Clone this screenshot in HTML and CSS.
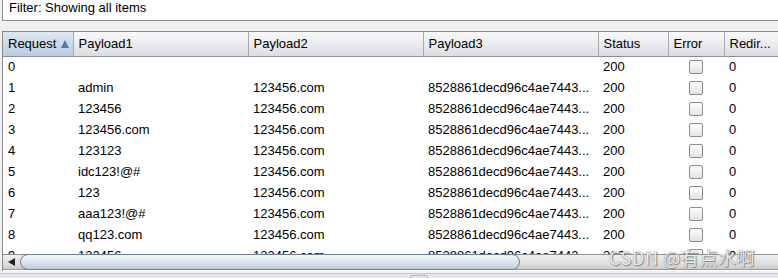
FILE: index.html
```html
<!DOCTYPE html>
<html lang="en">
<head>
    <meta charset="UTF-8">
    <title>Intruder results</title>
    <link rel="stylesheet" href="styles.css">
</head>
<body>
    <div class="filter-bar">Filter: Showing all items</div>

    <div class="results">
        <table class="grid">
            <colgroup>
                <col class="c-req"><col class="c-pay"><col class="c-pay"><col class="c-pay">
                <col class="c-status"><col class="c-error"><col class="c-redir">
            </colgroup>
            <thead>
                <tr>
                    <th class="sorted">Request <span class="sort-arrow"></span></th>
                    <th>Payload1</th>
                    <th>Payload2</th>
                    <th>Payload3</th>
                    <th>Status</th>
                    <th>Error</th>
                    <th>Redir...</th>
                </tr>
            </thead>
            <tbody id="rows"></tbody>
        </table>

        <div class="hscroll">
            <div class="arrow-btn"><span class="arrow-left"></span></div>
            <div class="thumb"></div>
        </div>
        <div class="watermark">CSDN @有点水啊</div>
    </div>
    <div class="bottom-strip"><span class="grip"></span></div>

    <script>
        const payloads = ['', 'admin', '123456', '123456.com', '123123', 'idc123!@#', '123', 'aaa123!@#', 'qq123.com', '123456'];
        const rows = document.getElementById('rows');

        payloads.forEach((p1, i) => {
            const tr = document.createElement('tr');
            const p2 = i === 0 ? '' : '123456.com';
            const p3 = i === 0 ? '' : '8528861decd96c4ae7443...';
            tr.innerHTML = `
                <td>${i}</td>
                <td>${p1}</td>
                <td>${p2}</td>
                <td>${p3}</td>
                <td>200</td>
                <td class="center"><span class="check"></span></td>
                <td>0</td>
            `;
            rows.appendChild(tr);
        });
    </script>
</body>
</html>
```

FILE: styles.css
```css
* {
    box-sizing: border-box;
    margin: 0;
    padding: 0;
}

body {
    font-family: 'Liberation Sans', Arial, sans-serif;
    font-size: 13px;
    color: #000;
    background: #f0f0f0;
    width: 778px;
    height: 278px;
    overflow: hidden;
}

.filter-bar {
    margin: -4px -10px 0 2px;
    height: 25px;
    padding: 4px 0 0 6px;
    line-height: 14px;
    background: #fff;
    border: 1px solid #8a8a8a;
}

.results {
    position: relative;
    margin: 10px 0 0 2px;
    height: 240px;
    background: #fff;
    border-left: 1px solid #8a8a8a;
    border-top: 1px solid #8a8a8a;
    overflow: hidden;
}

.grid {
    table-layout: fixed;
    border-collapse: collapse;
    width: 790px;
}

.c-req { width: 70px; }
.c-pay { width: 175px; }
.c-status { width: 70px; }
.c-error { width: 56px; }
.c-redir { width: 69px; }

.grid th {
    height: 24px;
    padding: 0 5px;
    font-weight: normal;
    text-align: left;
    white-space: nowrap;
    background: linear-gradient(#f9f9fa, #e9eaee 55%, #dcdde2);
    border-right: 1px solid #a7a8ad;
    border-bottom: 1px solid #8e8f94;
}

.grid th.sorted {
    background: linear-gradient(#dfe8f1, #c9d9e8 55%, #b9cde1);
}

.sort-arrow {
    display: inline-block;
    margin-left: 1px;
    border-left: 4px solid transparent;
    border-right: 4px solid transparent;
    border-bottom: 8px solid #4e7cab;
    vertical-align: 0;
}

.grid td {
    height: 21px;
    padding: 0 5px;
    white-space: nowrap;
    overflow: hidden;
}

.grid td.center {
    text-align: center;
    padding: 0;
}

.check {
    display: inline-block;
    width: 14px;
    height: 14px;
    vertical-align: -3px;
    border: 1px solid #8b8c8e;
    border-radius: 2px;
    background: linear-gradient(#fdfdfd, #e4e4e6);
}

.hscroll {
    position: absolute;
    left: 0;
    right: 0;
    top: 222px;
    height: 16px;
    display: flex;
    background: linear-gradient(#eeeeee, #dcdcdc 70%, #c9c9c9);
    border-top: 1px solid #8e8e8e;
    border-bottom: 1px solid #9a9a9a;
}

.arrow-btn {
    width: 17px;
    display: flex;
    align-items: center;
    justify-content: center;
}

.arrow-left {
    border-top: 4px solid transparent;
    border-bottom: 4px solid transparent;
    border-right: 7px solid #222;
}

.thumb {
    width: 500px;
    margin: -1px 0;
    background: linear-gradient(#f3f6fa, #dbe5ef 50%, #bccbdc);
    border: 1px solid #6c7d92;
    border-radius: 8px;
}

.watermark {
    position: absolute;
    left: 606px;
    top: 212px;
    font-family: 'Noto Sans CJK SC', sans-serif;
    font-size: 18px;
    color: rgba(255, 255, 255, 0.9);
    text-shadow: 0 0 1px #666, 1px 1px 1px #888;
    letter-spacing: 0.6px;
}

.bottom-strip {
    position: relative;
    margin-top: 2px;
    height: 8px;
    border-top: 1px solid #c9c9cf;
    background: #e6e6ea;
}

.grip {
    position: absolute;
    left: 410px;
    top: 1px;
    width: 18px;
    height: 6px;
    border: 1px solid #b5b5bb;
    border-radius: 2px;
}
```
